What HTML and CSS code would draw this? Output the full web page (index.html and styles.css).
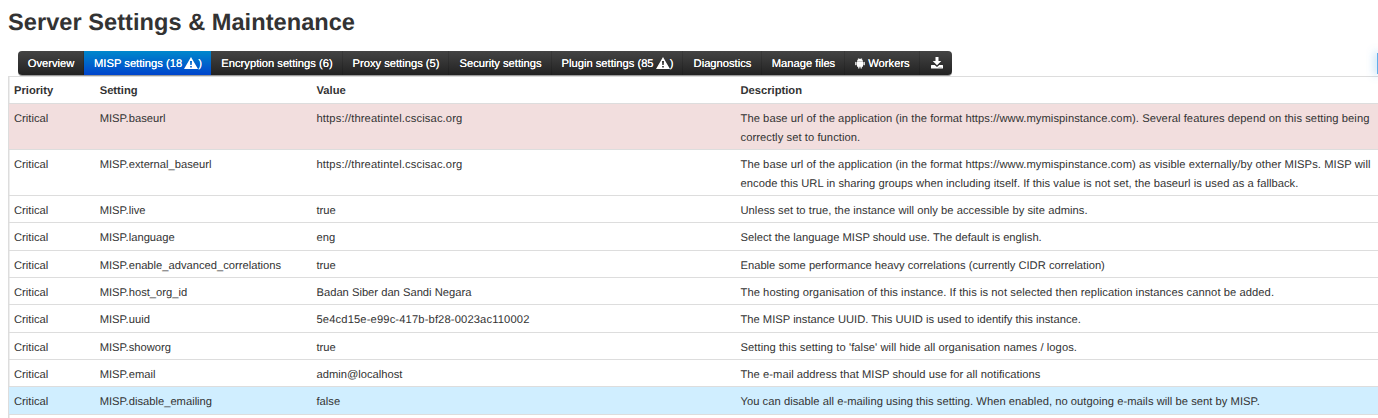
FILE: index.html
```html
<!DOCTYPE html>
<html lang="en">
<head>
<meta charset="utf-8">
<title>Server Settings &amp; Maintenance</title>
<link rel="stylesheet" href="styles.css">
</head>
<body>
<h1 class="title">Server Settings &amp; Maintenance</h1>
<div class="toolbar">
<nav class="tabs">
<a class="tab t-overview">Overview</a>
<a class="tab t-misp active">MISP settings (18 <svg class="warn" viewBox="0 0 14 12"><path fill="#fff" fill-rule="evenodd" d="M7 0 14 12H0ZM6 4 6.3 8H7.7L8 4ZM6.2 9V10.5H7.8V9Z"/></svg>)</a>
<a class="tab t-encryption">Encryption settings (6)</a>
<a class="tab t-proxy">Proxy settings (5)</a>
<a class="tab t-security">Security settings</a>
<a class="tab t-plugin">Plugin settings (85 <svg class="warn" viewBox="0 0 14 12"><path fill="#fff" fill-rule="evenodd" d="M7 0 14 12H0ZM6 4 6.3 8H7.7L8 4ZM6.2 9V10.5H7.8V9Z"/></svg>)</a>
<a class="tab t-diagnostics">Diagnostics</a>
<a class="tab t-files">Manage files</a>
<a class="tab t-workers"><svg class="robot" viewBox="0 0 10 11"><path fill="#fff" d="M2 3.4C2.100 2.300 2.600 1.600 3.300 1.200L2.800.3 3.200.1 3.800 1C4.600.7 5.400.7 6.200 1L6.800.1 7.200.3 6.700 1.200C7.400 1.600 7.900 2.300 8 3.400ZM2 3.700H8V8.200Q8 8.700 7.500 8.700H6.800V10.300Q6.200 11 5.500 10.300V8.700H4.500V10.300Q3.800 11 3.200 10.300V8.700H2.500Q2 8.700 2 8.200ZM.2 4.200Q.9 3.500 1.600 4.200V7Q.9 7.700 .2 7ZM8.400 4.200Q9.100 3.500 9.800 4.200V7Q9.100 7.700 8.400 7Z"/></svg>Workers</a>
<a class="tab t-download"><svg class="download" viewBox="0 0 12 12"><path fill="#fff" fill-rule="evenodd" d="M4.500 0H7.500V4H10.300L6 8.300 1.700 4H4.500ZM.5 8H3.700L6 10 8.300 8H11.500Q12 8 12 8.500V11Q12 11.500 11.500 11.500H.5Q0 11.500 0 11V8.500Q0 8 .5 8ZM7.700 9.900V10.600H8.500V9.900ZM9.600 9.900V10.600H10.400V9.900Z"/></svg></a>
</nav>
<div class="search"></div>
</div>
<main class="table">
<div class="row head"><span>Priority</span><span>Setting</span><span>Value</span><span>Description</span></div>
<div class="row tall error"><span>Critical</span><span>MISP.baseurl</span><span class="loose">https://threatintel.cscisac.org</span><span class="airy">The base url of the application (in the format https://www.mymispinstance.com). Several features depend on this setting being<br>correctly set to function.</span></div>
<div class="row tall"><span>Critical</span><span>MISP.external_baseurl</span><span class="loose">https://threatintel.cscisac.org</span><span><span class="airy">The base url of the application (in the format https://www.mymispinstance.com) as visible externally/by other MISPs. MISP will</span><br><span class="open">encode this URL in sharing groups when including itself. If this value is not set, the baseurl is used as a fallback.</span></span></div>
<div class="row"><span>Critical</span><span>MISP.live</span><span>true</span><span class="open">Unless set to true, the instance will only be accessible by site admins.</span></div>
<div class="row"><span>Critical</span><span>MISP.language</span><span>eng</span><span>Select the language MISP should use. The default is english.</span></div>
<div class="row"><span>Critical</span><span>MISP.enable_advanced_correlations</span><span>true</span><span>Enable some performance heavy correlations (currently CIDR correlation)</span></div>
<div class="row"><span>Critical</span><span>MISP.host_org_id</span><span>Badan Siber dan Sandi Negara</span><span class="airy">The hosting organisation of this instance. If this is not selected then replication instances cannot be added.</span></div>
<div class="row"><span>Critical</span><span>MISP.uuid</span><span class="loose">5e4cd15e-e99c-417b-bf28-0023ac110002</span><span>The MISP instance UUID. This UUID is used to identify this instance.</span></div>
<div class="row"><span>Critical</span><span>MISP.showorg</span><span>true</span><span class="airy">Setting this setting to 'false' will hide all organisation names / logos.</span></div>
<div class="row"><span>Critical</span><span>MISP.email</span><span>admin@localhost</span><span class="open">The e-mail address that MISP should use for all notifications</span></div>
<div class="row info"><span>Critical</span><span>MISP.disable_emailing</span><span>false</span><span class="open">You can disable all e-mailing using this setting. When enabled, no outgoing e-mails will be sent by MISP.</span></div>
<div class="row last"></div>
</main>
</body>
</html>
```
FILE: styles.css
```css
* { box-sizing: border-box; }
body {
  margin: 0;
  height: 418px;
  overflow: hidden;
  background: #fff;
  color: #333;
  font: 11.2px/18.7px "Liberation Sans", Arial, sans-serif;
  text-rendering: geometricPrecision;
}
.title {
  margin: 0;
  padding: 4px 0 0 8px;
  height: 51px;
  font-size: 23.6px;
  line-height: 38px;
  letter-spacing: .03px;
  white-space: nowrap;
}
.toolbar {
  display: flex;
  justify-content: space-between;
  height: 25px;
  padding-left: 18px;
}
.tabs {
  display: flex;
  height: 24px;
  border-radius: 4px;
  overflow: hidden;
  background: linear-gradient(#444, #222);
  box-shadow: 0 1px #999;
}
.tab {
  display: flex;
  align-items: center;
  justify-content: center;
  white-space: pre;
  color: #fff;
  border-right: 1px solid rgba(0, 0, 0, .12);
  padding: 2px 0 0 1px;
  text-shadow: 0 0 .5px #fff;
}
.active { background: linear-gradient(#08c, #04c); border: 0; }
.t-overview { width: 66px; }
.t-misp { width: 127px; }
.t-encryption { width: 132px; }
.t-proxy { width: 106px; }
.t-security { width: 103px; }
.t-plugin { width: 131px; }
.t-diagnostics { width: 79px; }
.t-files { width: 83px; }
.t-workers { width: 75px; }
.t-download { width: 32px; border: 0; }
.warn { width: 14px; height: 12px; margin: 0 0 2px -1px; }
.robot { width: 10px; height: 11px; margin: 0 3px 1px 0; }
.download { width: 12px; height: 12px; margin-bottom: 2px; }
.search {
  width: 1px;
  height: 21px;
  margin-top: 2px;
  background: #62aeea;
  box-shadow: 0 0 8px 1px rgba(82, 168, 236, .7);
}
.table {
  height: 342px;
  overflow: hidden;
  margin-left: 8px;
  border-top: 1px solid #ddd;
  border-left: 1px solid #ddd;
  box-shadow: inset 1px 0 #eee;
}
.row {
  display: grid;
  grid-template-columns: 85.7px 216.8px 424px 1fr;
  height: 27.35px;
  padding: 6px 0 0 5px;
  border-top: 1px solid #ddd;
  white-space: nowrap;
}
.row.head { height: 26px; padding-top: 5px; border: 0; font-weight: bold; }
.row.tall { height: 46px; }
.row.last { height: 4px; padding: 0; }
.error { background: #f2dede; }
.info { background: #d0eeff; }
.open { letter-spacing: .036px; }
.airy { letter-spacing: .062px; }
.loose { letter-spacing: .135px; }
```
